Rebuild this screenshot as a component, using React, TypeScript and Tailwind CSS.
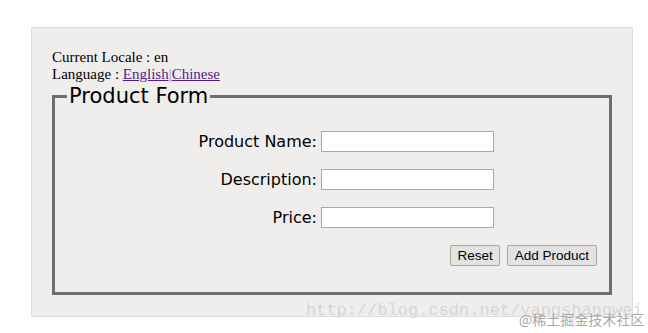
export default function App() {
  return (
    <div className="relative w-[648px] h-[333px] bg-white overflow-hidden">
      {/* Panel */}
      <div className="absolute left-[31px] top-[27px] w-[602px] h-[290px] bg-[#efeeec] border border-[#dddcda] pt-[21px] pl-[20px] pr-[20px] font-['Liberation_Serif',serif] text-[15px] leading-[17px] text-black">
        <div>Current Locale : en</div>
        <div>
          Language :{' '}
          <a href="#" className="underline text-[#551a8b]">English</a>
          <span className="text-[#999]">|</span>
          <a href="#" className="underline text-[#551a8b]">Chinese</a>
        </div>

        {/* Product Form */}
        <fieldset className="border-[3px] border-[#6e6e6e] w-[560px] h-[212px] font-['DejaVu_Sans',sans-serif]">
          <legend className="ml-[12px] px-[2px] text-[21px] leading-[26px]">Product Form</legend>
          <div className="grid grid-cols-[262px_173px] gap-x-[4px] gap-y-[17px] mt-[22px] items-center text-[16px] leading-[21px]">
            <label className="text-right">Product Name:</label>
            <input className="h-[21px] bg-white border border-[#a9a9a9]" />
            <label className="text-right">Description:</label>
            <input className="h-[21px] bg-white border border-[#a9a9a9]" />
            <label className="text-right">Price:</label>
            <input className="h-[21px] bg-white border border-[#a9a9a9]" />
          </div>
          <div className="flex justify-end gap-[7px] mt-[17px] mr-[12px] font-['Liberation_Sans',sans-serif] text-[13.5px] leading-[19px]">
            <button className="h-[21px] px-[6px] bg-[#e3e3e3] border border-[#a6a6a6] rounded-[2px]">Reset</button>
            <button className="h-[21px] px-[7px] bg-[#e3e3e3] border border-[#a6a6a6] rounded-[2px]">Add Product</button>
          </div>
        </fieldset>
      </div>

      {/* Watermarks */}
      <div className="absolute left-[306px] top-[301px] font-['Liberation_Mono',monospace] text-[17px] leading-[20px] text-[#cfcfcf]/80 whitespace-nowrap">
        http://blog.csdn.net/yangshangwei
      </div>
      <div className="absolute left-[519px] top-[310px] font-['Noto_Sans_CJK_SC',sans-serif] text-[14px] leading-[18px] text-[#a8a8a8] whitespace-nowrap">
        @稀土掘金技术社区
      </div>
    </div>
  );
}
